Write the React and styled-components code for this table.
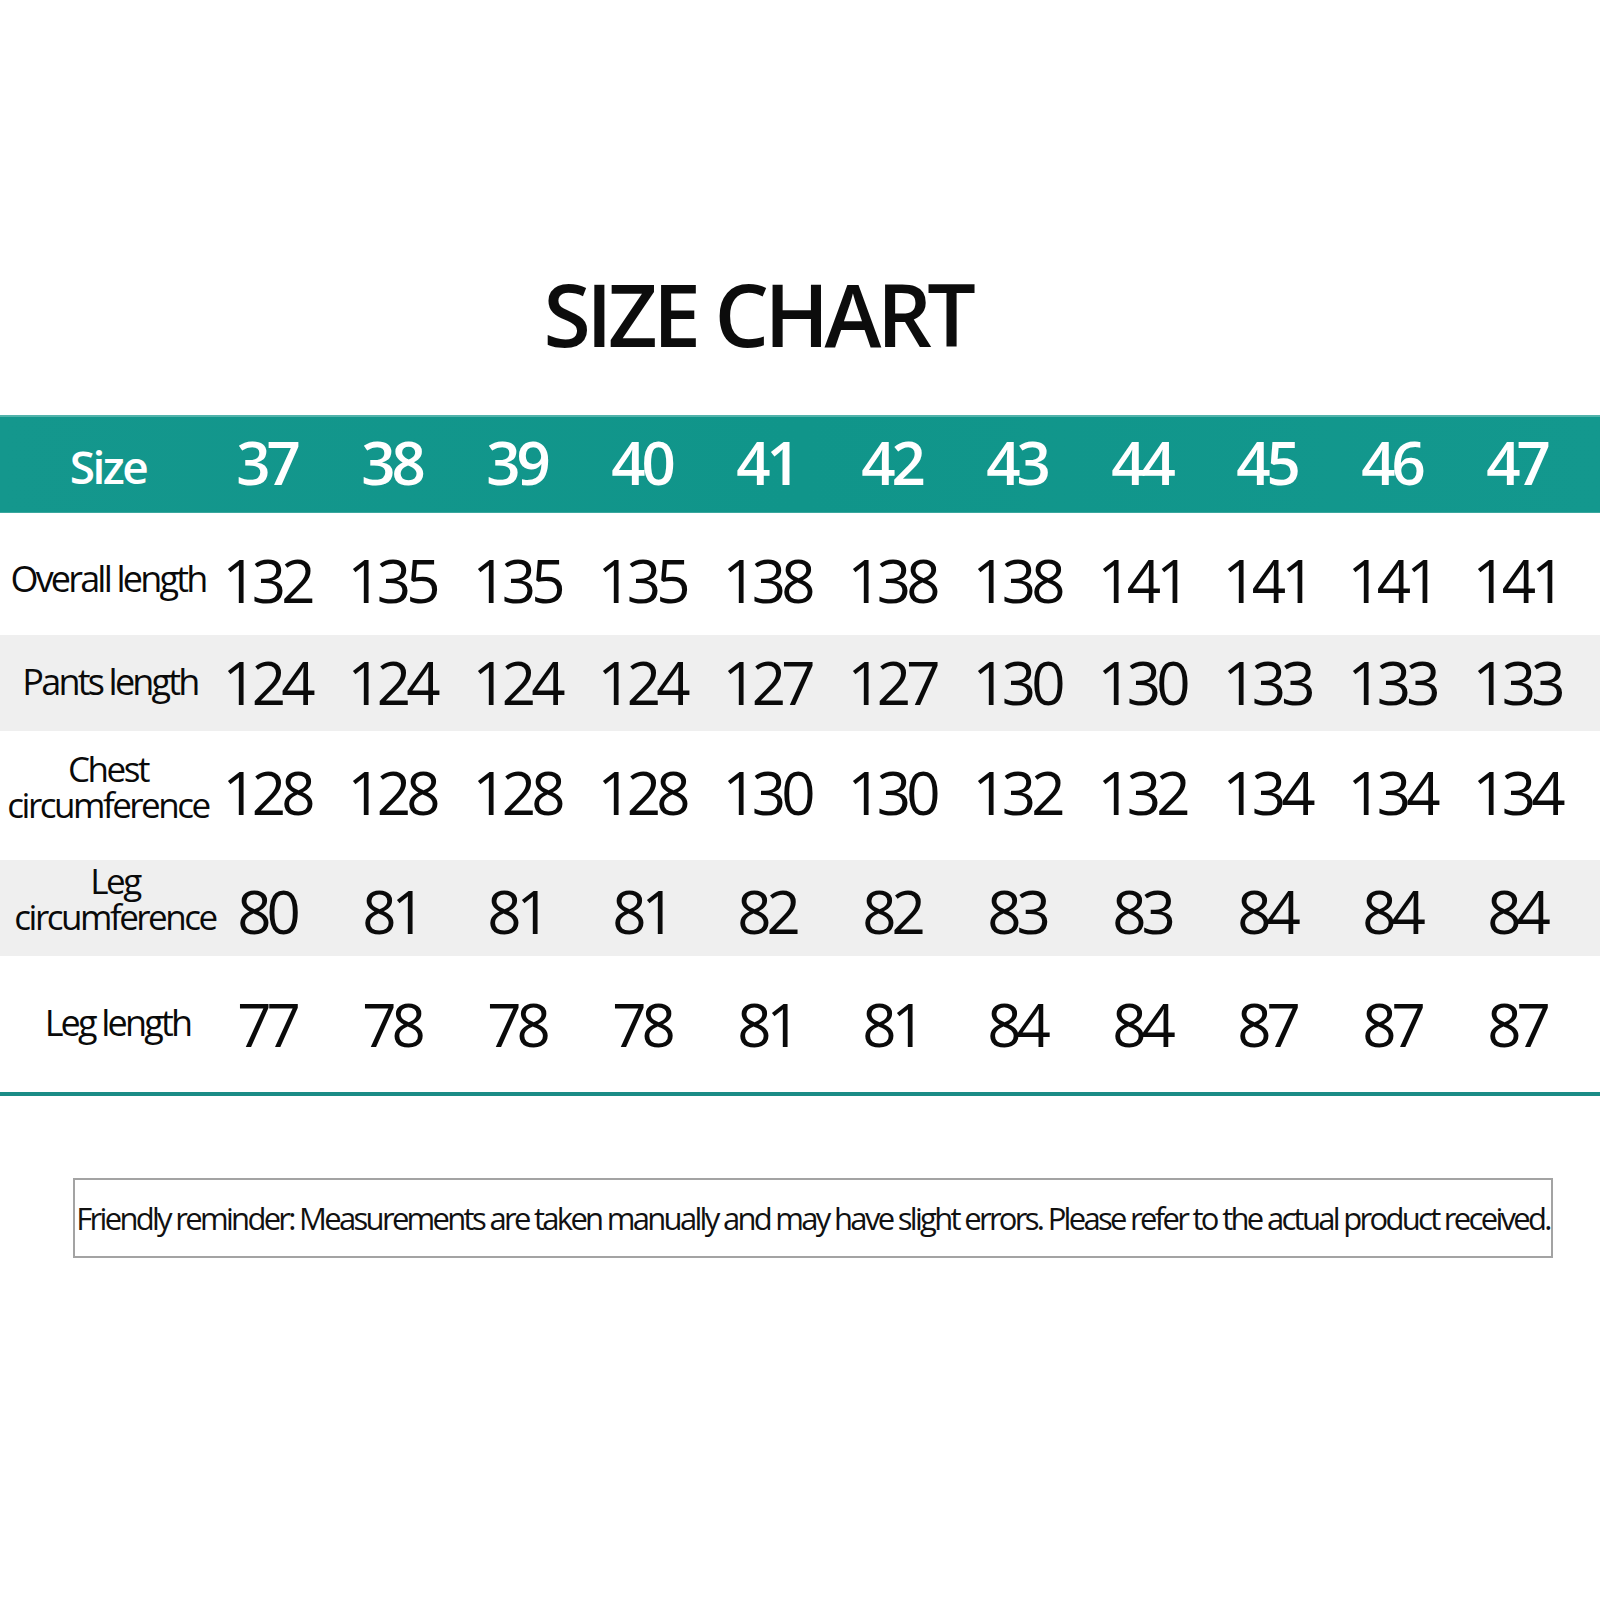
import React from "react";
import styled, { createGlobalStyle } from "styled-components";

const GlobalStyle = createGlobalStyle`
  html, body {
    margin: 0;
    padding: 0;
    background: #ffffff;
  }
  body {
    font-family: "Open Sans", "Noto Sans", "DejaVu Sans", sans-serif;
    color: #111111;
  }
`;

const Page = styled.div`
  width: 1600px;
  height: 1600px;
  background: #ffffff;
  padding-top: 271px;
  box-sizing: border-box;
`;

const Title = styled.h1`
  margin: 0;
  padding-right: 85px;
  text-align: center;
  font-family: "Open Sans", sans-serif;
  font-weight: 600;
  font-size: 86px;
  line-height: 86px;
  letter-spacing: -4.5px;
  color: #0c0c0c;
`;

const Table = styled.div`
  margin-top: 58px;
  display: flex;
  flex-direction: column;
`;

const HeaderRow = styled.div`
  display: grid;
  grid-template-columns: 204px repeat(11, 125px);
  height: 98px;
  box-sizing: border-box;
  background: linear-gradient(90deg, #14978d 0%, #10958a 50%, #13988e 100%);
  border-top: 2px solid #52b3ab;
  border-bottom: 1px solid #3aa79e;
  color: #ffffff;
`;

const Row = styled.div`
  display: grid;
  grid-template-columns: 204px repeat(11, 125px);
  height: ${(p) => p.$h}px;
  background: ${(p) => (p.$shade ? "#efefef" : "#ffffff")};
`;

const Cell = styled.div`
  display: flex;
  align-items: center;
  justify-content: center;
  white-space: nowrap;
  box-sizing: border-box;
  padding-top: ${(p) => Math.max(0, 2 * (p.$shift || 0))}px;
  padding-bottom: ${(p) => Math.max(0, -2 * (p.$shift || 0))}px;
`;

const HeadLabel = styled(Cell)`
  padding-left: 12px;
  font-weight: 600;
  font-size: 46px;
  line-height: 46px;
  letter-spacing: -2.5px;
`;

const HeadNum = styled(Cell)`
  font-weight: 600;
  font-size: 60px;
  line-height: 60px;
  letter-spacing: -4px;
`;

const Label = styled(Cell)`
  flex-direction: column;
  padding-left: ${(p) => 12 + 2 * (p.$dx || 0)}px;
  font-weight: 400;
  font-size: ${(p) => (p.$two ? 35 : 36)}px;
  line-height: 36px;
  letter-spacing: ${(p) => (p.$two ? -2.5 : -2.8)}px;
  color: #0a0a0a;
  text-align: center;
`;

const LabelLine = styled.span`
  display: block;
  height: 36px;
`;

const Num = styled(Cell)`
  font-weight: 400;
  font-size: 60px;
  line-height: 60px;
  letter-spacing: -5px;
  color: #0a0a0a;
`;

const BottomRule = styled.div`
  height: 4px;
  background: #1a8c86;
`;

const Note = styled.div`
  margin: 82px 0 0 73px;
  width: 1480px;
  height: 80px;
  box-sizing: border-box;
  border: 2px solid #a3a3a3;
  display: flex;
  align-items: center;
  justify-content: center;
  white-space: nowrap;
  font-size: 31px;
  line-height: 31px;
  letter-spacing: -2.7px;
  color: #111111;
`;

const sizes = [37, 38, 39, 40, 41, 42, 43, 44, 45, 46, 47];

const rows = [
  {
    label: ["Overall length"],
    h: 122,
    shade: false,
    shift: 5.5,
    labelShift: 5,
    dx: 0,
    values: [132, 135, 135, 135, 138, 138, 138, 141, 141, 141, 141],
  },
  {
    label: ["Pants length"],
    h: 96,
    shade: true,
    shift: -1,
    labelShift: -1.5,
    dx: 2,
    values: [124, 124, 124, 124, 127, 127, 130, 130, 133, 133, 133],
  },
  {
    label: ["Chest", "circumference"],
    h: 129,
    shade: false,
    shift: -3.5,
    labelShift: -9,
    dx: 0,
    values: [128, 128, 128, 128, 130, 130, 132, 132, 134, 134, 134],
  },
  {
    label: ["Leg", "circumference"],
    h: 96,
    shade: true,
    shift: 3,
    labelShift: -9,
    dx: 7,
    values: [80, 81, 81, 81, 82, 82, 83, 83, 84, 84, 84],
  },
  {
    label: ["Leg length"],
    h: 136,
    shade: false,
    shift: 0,
    labelShift: -1,
    dx: 9.5,
    values: [77, 78, 78, 78, 81, 81, 84, 84, 87, 87, 87],
  },
];

export default function App() {
  return (
    <>
      <GlobalStyle />
      <Page>
        <Title>SIZE CHART</Title>
        <Table>
          <HeaderRow>
            <HeadLabel $shift={1}>Size</HeadLabel>
            {sizes.map((s) => (
              <HeadNum key={s} $shift={-2.5}>
                {s}
              </HeadNum>
            ))}
          </HeaderRow>
          {rows.map((r) => (
            <Row key={r.label.join(" ")} $h={r.h} $shade={r.shade}>
              <Label
                $shift={r.labelShift}
                $dx={r.dx}
                $two={r.label.length > 1}
              >
                {r.label.map((line) => (
                  <LabelLine key={line}>{line}</LabelLine>
                ))}
              </Label>
              {r.values.map((v, i) => (
                <Num key={i} $shift={r.shift}>
                  {v}
                </Num>
              ))}
            </Row>
          ))}
          <BottomRule />
        </Table>
        <Note>
          Friendly reminder: Measurements are taken manually and may have slight
          errors. Please refer to the actual product received.
        </Note>
      </Page>
    </>
  );
}
